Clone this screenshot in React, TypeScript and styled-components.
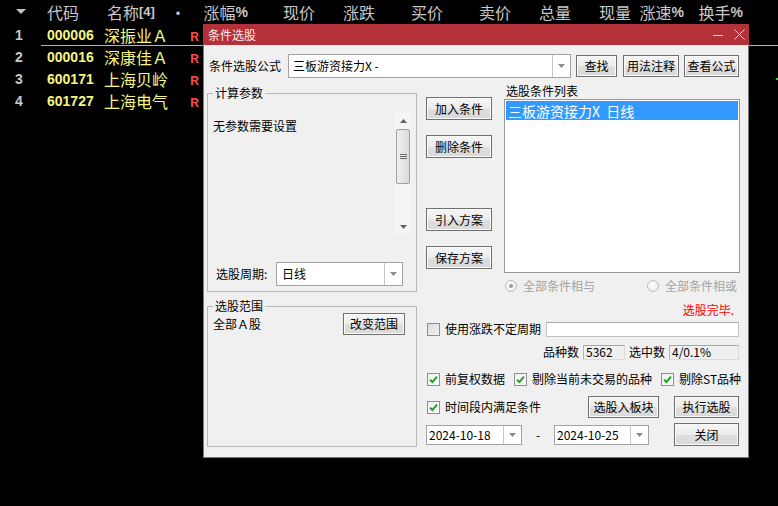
import styled, { createGlobalStyle } from "styled-components";

const GlobalStyle = createGlobalStyle`
  html, body { margin: 0; padding: 0; background: #000; }
  body { font-family: "Noto Sans CJK SC", "Liberation Sans", sans-serif; }
  * { box-sizing: border-box; }
`;

const COLS = "41px 59px 70px 16px 17px 45px 67px 60px 68px 68px 60px 60px 53px 59px 1fr";

const stocks = [
    { idx: 1, code: "000006", name: "深振业Ａ" },
    { idx: 2, code: "000016", name: "深康佳Ａ" },
    { idx: 3, code: "600171", name: "上海贝岭" },
    { idx: 4, code: "601727", name: "上海电气" },
];

const heads = ["涨幅", "现价", "涨跌", "买价", "卖价", "总量", "现量", "涨速", "换手"];
const pct = ["涨幅", "涨速", "换手"];

function Arrow({ color = "#8c8c8c", up = false }: { color?: string; up?: boolean }) {
    return (
        <svg width="7" height="4" viewBox="0 0 7 4">
            <path d={up ? "M0 4 H7 L3.5 0 Z" : "M0 0 H7 L3.5 4 Z"} fill={color} />
        </svg>
    );
}

function Tick() {
    return (
        <svg width="9" height="9" viewBox="0 0 9 9">
            <path d="M1 4.6 L3.4 7 L8 1.6" stroke="#1f9e1f" strokeWidth="1.9" fill="none" />
        </svg>
    );
}

function Checkbox({ on, label }: { on?: boolean; label: string }) {
    return (
        <CheckItem>
            <CheckBox $on={on}>{on ? <Tick /> : null}</CheckBox>
            <span>{label}</span>
        </CheckItem>
    );
}

function Combo({ w, h, pad, text }: { w: number; h: number; pad: number; text: string }) {
    return (
        <ComboBox $w={w} $h={h}>
            <ComboText $pad={pad}>{text}</ComboText>
            <ComboArrow><Arrow /></ComboArrow>
        </ComboBox>
    );
}

function App() {
    return (
        <Screen>
            <GlobalStyle />
            <HeaderRow>
                <HeadCell $align="center">
                    <svg width="10" height="6" viewBox="0 0 10 6"><path d="M0 0 H10 L5 5 Z" fill="#c4c4c4" /></svg>
                </HeadCell>
                <HeadCell $align="left" $pad={6}>代码</HeadCell>
                <HeadCell $align="left" $pad={7}>名称<Small>[4]</Small></HeadCell>
                <HeadCell $align="center">•</HeadCell>
                <HeadCell />
                {heads.map((h) => (
                    <HeadCell key={h}>{h}{pct.includes(h) ? <b>%</b> : null}</HeadCell>
                ))}
                <HeadCell />
            </HeaderRow>

            {stocks.map((s) => (
                <StockRow key={s.code}>
                    <IndexCell>{s.idx}</IndexCell>
                    <RowBody $selected={s.idx === 1}>
                        <CodeCell>{s.code}</CodeCell>
                        <NameCell>{s.name}</NameCell>
                        <span />
                        <MarkCell>R</MarkCell>
                        <EndCell>{s.idx === 3 ? <GreenDot /> : null}</EndCell>
                    </RowBody>
                </StockRow>
            ))}

            <Dialog>
                <TitleBar>
                    <span>条件选股</span>
                    <TitleControls>
                        <svg width="10" height="10" viewBox="0 0 10 10"><line x1="0" y1="5.5" x2="10" y2="5.5" stroke="#f4d9d9" /></svg>
                        <svg width="11" height="11" viewBox="0 0 11 11"><path d="M0.5 0.5 L10.5 10.5 M10.5 0.5 L0.5 10.5" stroke="#f4d9d9" /></svg>
                    </TitleControls>
                </TitleBar>
                <Body>
                    <FormulaRow>
                        <FormulaLabel>条件选股公式</FormulaLabel>
                        <Combo w={283} h={24} pad={4} text="三板游资接力X -" />
                        <Btn $w={41} $h={22} style={{ marginLeft: 5 }}>查找</Btn>
                        <Btn $w={56} $h={22} style={{ marginLeft: 6 }}>用法注释</Btn>
                        <Btn $w={55} $h={22} style={{ marginLeft: 5 }}>查看公式</Btn>
                    </FormulaRow>

                    <Main>
                        <LeftCol>
                            <Group $h={206}>
                                <Legend>计算参数</Legend>
                                <ParamArea>
                                    <ParamText>无参数需要设置</ParamText>
                                    <ScrollTrack>
                                        <ScrollArrow><Arrow up color="#606060" /></ScrollArrow>
                                        <Thumb>
                                            <svg width="7" height="6" viewBox="0 0 7 6">
                                                <path d="M0 0.5 H7 M0 2.5 H7 M0 4.5 H7" stroke="#6c6c6c" />
                                            </svg>
                                        </Thumb>
                                        <Fill />
                                        <ScrollArrow><Arrow color="#606060" /></ScrollArrow>
                                    </ScrollTrack>
                                </ParamArea>
                                <PeriodRow>
                                    <PeriodLabel>选股周期:</PeriodLabel>
                                    <Combo w={127} h={24} pad={5} text="日线" />
                                </PeriodRow>
                            </Group>
                            <Group $h={148} style={{ marginTop: 7 }}>
                                <Legend>选股范围</Legend>
                                <RangeRow>
                                    <span>全部Ａ股</span>
                                    <Btn $w={62} $h={22}>改变范围</Btn>
                                </RangeRow>
                            </Group>
                        </LeftCol>

                        <RightCol>
                            <TopArea>
                                <ButtonCol>
                                    <Btn $w={66} $h={23}>加入条件</Btn>
                                    <Btn $w={66} $h={23} style={{ marginTop: 15 }}>删除条件</Btn>
                                    <Btn $w={66} $h={23} style={{ marginTop: 50 }}>引入方案</Btn>
                                    <Btn $w={66} $h={23} style={{ marginTop: 15 }}>保存方案</Btn>
                                </ButtonCol>
                                <ListCol>
                                    <ListLabel>选股条件列表</ListLabel>
                                    <ListBox>
                                        <ListItem $selected>三板游资接力X&nbsp;&nbsp;日线</ListItem>
                                    </ListBox>
                                </ListCol>
                            </TopArea>

                            <RadioRow>
                                <RadioItem><RadioDot $on />全部条件相与</RadioItem>
                                <RadioItem><RadioDot />全部条件相或</RadioItem>
                            </RadioRow>

                            <StatusRow>选股完毕.</StatusRow>

                            <UseRow>
                                <Checkbox label="使用涨跌不定周期" />
                                <TextInput />
                            </UseRow>

                            <CountRow>
                                <span>品种数</span>
                                <Sunken $w={42}>5362</Sunken>
                                <span>选中数</span>
                                <Sunken $w={70}>4/0.1%</Sunken>
                            </CountRow>

                            <OptionRow>
                                <Checkbox on label="前复权数据" />
                                <Checkbox on label="剔除当前未交易的品种" />
                                <Checkbox on label="剔除ST品种" />
                            </OptionRow>

                            <ActionRow>
                                <Checkbox on label="时间段内满足条件" />
                                <Btn $w={71} $h={22} style={{ marginLeft: "auto" }}>选股入板块</Btn>
                                <Btn $w={65} $h={22} style={{ marginLeft: 15, marginRight: 1 }}>执行选股</Btn>
                            </ActionRow>

                            <DateRow>
                                <Combo w={96} h={20} pad={2} text="2024-10-18" />
                                <Dash>-</Dash>
                                <Combo w={95} h={20} pad={2} text="2024-10-25" />
                                <Btn $w={65} $h={23} style={{ marginLeft: "auto", marginRight: 1 }}>关闭</Btn>
                            </DateRow>
                        </RightCol>
                    </Main>
                </Body>
            </Dialog>
        </Screen>
    );
}

export default App;

const Screen = styled.div`
    position: relative;
    width: 778px;
    height: 506px;
    overflow: hidden;
    background: #000;
`;

const HeaderRow = styled.div`
    display: grid;
    grid-template-columns: ${COLS};
    height: 24px;
    align-items: center;
    color: #c8c8c8;
    font-size: 16px;
    line-height: 20px;
    b {
        font-family: "Liberation Sans", sans-serif;
        font-weight: bold;
        font-size: 14px;
    }
`;

const HeadCell = styled.div<{ $align?: "left" | "center" | "right"; $pad?: number }>`
    display: flex;
    align-items: center;
    justify-content: ${(p) => (p.$align === "left" ? "flex-start" : p.$align === "center" ? "center" : "flex-end")};
    padding-left: ${(p) => p.$pad ?? 0}px;
    white-space: nowrap;
`;

const Small = styled.span`
    font-family: "Liberation Sans", sans-serif;
    font-weight: bold;
    font-size: 13px;
`;

const StockRow = styled.div`
    display: flex;
    height: 22px;
`;

const IndexCell = styled.div`
    width: 41px;
    padding-right: 3px;
    text-align: center;
    font: bold 14px/22px "Liberation Sans", sans-serif;
    color: #c8c8c8;
`;

const RowBody = styled.div<{ $selected?: boolean }>`
    flex: 1;
    display: grid;
    grid-template-columns: 59px 70px 16px 17px 1fr;
    align-items: center;
    border-bottom: 1px solid ${(p) => (p.$selected ? "#cfc22a" : "transparent")};
`;

const CodeCell = styled.div`
    padding-left: 6px;
    font: bold 14px/20px "Liberation Sans", sans-serif;
    color: #f6f680;
`;

const NameCell = styled.div`
    padding-left: 4px;
    font-size: 16px;
    line-height: 20px;
    color: #f6f680;
    white-space: nowrap;
`;

const MarkCell = styled.div`
    padding-top: 4px;
    text-align: center;
    font: bold 12px/14px "Liberation Sans", sans-serif;
    color: #ff4d4d;
`;

const EndCell = styled.div`
    display: flex;
    justify-content: flex-end;
    align-self: end;
    padding-bottom: 9px;
`;

const GreenDot = styled.span`
    width: 2px;
    height: 2px;
    background: #22dd22;
`;

const Dialog = styled.div`
    position: absolute;
    left: 203px;
    top: 24px;
    width: 546px;
    height: 434px;
    display: flex;
    flex-direction: column;
    background: #f0f0f0;
    border: 1px solid #7a7a7a;
    border-top: none;
    font-family: "Noto Sans CJK SC", sans-serif;
    font-size: 12px;
    line-height: 14px;
    color: #000;
`;

const TitleBar = styled.div`
    height: 21px;
    margin: 0 -1px;
    display: flex;
    align-items: center;
    padding: 0 4px 0 5px;
    background: #b5313a;
    color: #fbeaea;
`;

const TitleControls = styled.div`
    margin-left: auto;
    display: flex;
    align-items: center;
    gap: 11px;
`;

const Body = styled.div`
    flex: 1;
    padding: 9px 8px 0 3px;
`;

const FormulaRow = styled.div`
    display: flex;
    align-items: center;
    height: 24px;
`;

const FormulaLabel = styled.span`
    width: 77px;
    margin-left: 2px;
    margin-right: 2px;
    white-space: nowrap;
`;

const ComboBox = styled.div<{ $w: number; $h: number }>`
    display: flex;
    flex-shrink: 0;
    width: ${(p) => p.$w}px;
    height: ${(p) => p.$h}px;
    background: #fff;
    border: 1px solid #a2a2a2;
`;

const ComboText = styled.div<{ $pad: number }>`
    flex: 1;
    display: flex;
    align-items: center;
    padding-left: ${(p) => p.$pad}px;
    white-space: nowrap;
    overflow: hidden;
`;

const ComboArrow = styled.div`
    width: 18px;
    display: flex;
    align-items: center;
    justify-content: center;
    border-left: 1px solid #c6c6c6;
`;

const Btn = styled.button<{ $w: number; $h?: number }>`
    flex-shrink: 0;
    width: ${(p) => p.$w}px;
    height: ${(p) => p.$h ?? 23}px;
    padding: 0;
    border: 1px solid #707070;
    border-radius: 0;
    background: linear-gradient(#f5f5f5 0%, #ececec 50%, #dfdfdf 51%, #d9d9d9 100%);
    box-shadow: inset 0 0 0 1px #fafafa;
    font-family: "Noto Sans CJK SC", sans-serif;
    font-size: 12px;
    line-height: 14px;
    color: #000;
    white-space: nowrap;
`;

const Main = styled.div`
    display: flex;
    margin-top: 6px;
`;

const LeftCol = styled.div`
    width: 210px;
    margin-top: 2px;
    display: flex;
    flex-direction: column;
`;

const Group = styled.fieldset<{ $h: number }>`
    margin: 0;
    padding: 0;
    min-width: 0;
    height: ${(p) => p.$h}px;
    border: 1px solid #b9b9b9;
    display: flex;
    flex-direction: column;
`;

const Legend = styled.legend`
    margin-left: 5px;
    padding: 0 2px;
    font-size: 12px;
    line-height: 14px;
`;

const ParamArea = styled.div`
    display: flex;
    height: 123px;
    margin-top: 12px;
`;

const ParamText = styled.div`
    flex: 1;
    padding: 7px 0 0 5px;
`;

const ScrollTrack = styled.div`
    width: 16px;
    margin-right: 5px;
    display: flex;
    flex-direction: column;
    align-items: center;
    background: #f5f5f5;
`;

const ScrollArrow = styled.div`
    height: 17px;
    display: flex;
    align-items: center;
    justify-content: center;
`;

const Thumb = styled.div`
    width: 14px;
    height: 55px;
    border: 1px solid #9f9f9f;
    border-radius: 2px;
    background: linear-gradient(to right, #efefef, #dadada);
    display: flex;
    align-items: center;
    justify-content: center;
`;

const Fill = styled.div`
    flex: 1;
`;

const PeriodRow = styled.div`
    display: flex;
    align-items: center;
    height: 24px;
    margin-top: 27px;
`;

const PeriodLabel = styled.span`
    width: 68px;
    padding-left: 8px;
    white-space: nowrap;
`;

const RangeRow = styled.div`
    display: flex;
    align-items: center;
    justify-content: space-between;
    height: 22px;
    padding: 0 11px 0 5px;
`;

const RightCol = styled.div`
    width: 314px;
    margin-left: 9px;
    display: flex;
    flex-direction: column;
`;

const TopArea = styled.div`
    display: flex;
    height: 189px;
`;

const ButtonCol = styled.div`
    width: 66px;
    padding-top: 13px;
    display: flex;
    flex-direction: column;
`;

const ListCol = styled.div`
    width: 236px;
    margin-left: 12px;
    display: flex;
    flex-direction: column;
`;

const ListLabel = styled.div`
    height: 15px;
    padding-left: 2px;
`;

const ListBox = styled.div`
    flex: 1;
    padding: 1px;
    background: #fff;
    border: 1px solid #999;
`;

const ListItem = styled.div<{ $selected?: boolean }>`
    height: 19px;
    padding-left: 2px;
    display: flex;
    align-items: center;
    font-size: 14px;
    background: ${(p) => (p.$selected ? "#3399ff" : "transparent")};
    color: ${(p) => (p.$selected ? "#fff" : "#000")};
    white-space: nowrap;
`;

const RadioRow = styled.div`
    display: flex;
    justify-content: space-between;
    height: 14px;
    margin-top: 6px;
    padding: 0 3px 0 79px;
    color: #a3a3a3;
`;

const RadioItem = styled.label`
    display: flex;
    align-items: center;
    gap: 6px;
    white-space: nowrap;
`;

const RadioDot = styled.span<{ $on?: boolean }>`
    width: 12px;
    height: 12px;
    border-radius: 50%;
    border: 1px solid #bdbdbd;
    background: radial-gradient(circle at 40% 40%, #ffffff, #e8e8e8);
    display: flex;
    align-items: center;
    justify-content: center;
    &::after {
        content: "";
        display: ${(p) => (p.$on ? "block" : "none")};
        width: 4px;
        height: 4px;
        border-radius: 50%;
        background: #9a9a9a;
    }
`;

const StatusRow = styled.div`
    height: 14px;
    margin-top: 10px;
    padding-right: 6px;
    text-align: right;
    color: #ff0000;
`;

const UseRow = styled.div`
    display: flex;
    align-items: center;
    height: 16px;
    margin-top: 4px;
`;

const CheckItem = styled.label`
    display: flex;
    align-items: center;
    gap: 5px;
    margin-left: 1px;
    white-space: nowrap;
`;

const CheckBox = styled.span<{ $on?: boolean }>`
    flex-shrink: 0;
    width: 13px;
    height: 13px;
    border: 1px solid #8e8f8f;
    background: ${(p) => (p.$on ? "linear-gradient(135deg, #f0f0f0, #fdfdfd)" : "linear-gradient(135deg, #dcdcdc, #f2f2f2)")};
    display: flex;
    align-items: center;
    justify-content: center;
`;

const TextInput = styled.div`
    width: 193px;
    height: 15px;
    margin-left: auto;
    margin-right: 1px;
    background: #fff;
    border: 1px solid #c2c2c2;
    border-top-color: #a8a8a8;
`;

const CountRow = styled.div`
    display: flex;
    align-items: center;
    justify-content: flex-end;
    gap: 4px;
    height: 16px;
    margin-top: 7px;
    padding-right: 1px;
`;

const Sunken = styled.div<{ $w: number }>`
    width: ${(p) => p.$w}px;
    height: 15px;
    padding-left: 2px;
    display: flex;
    align-items: center;
    border: 1px solid #dadada;
    border-top-color: #a6a6a6;
    border-left-color: #b4b4b4;
`;

const OptionRow = styled.div`
    display: flex;
    align-items: center;
    gap: 8px;
    height: 14px;
    margin-top: 12px;
`;

const ActionRow = styled.div`
    display: flex;
    align-items: center;
    height: 22px;
    margin-top: 10px;
`;

const DateRow = styled.div`
    display: flex;
    align-items: center;
    height: 23px;
    margin-top: 5px;
`;

const Dash = styled.span`
    width: 32px;
    text-align: center;
`;
